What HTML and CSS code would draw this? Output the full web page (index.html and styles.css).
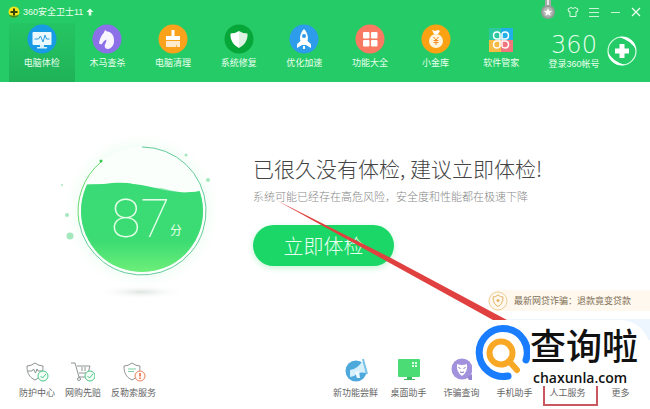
FILE: index.html
```html
<!DOCTYPE html>
<html lang="zh-CN">
<head>
    <meta charset="UTF-8">
    <meta name="viewport" content="width=device-width, initial-scale=1.0">
    <title>360安全卫士11</title>
    <link rel="stylesheet" href="styles.css">
</head>
<body>
    <header class="header">
        <div class="titlebar">
            <svg class="brand-icon" viewBox="0 0 12 12" width="12" height="12">
                <circle cx="6" cy="6" r="5.5" fill="#f5e51b"/>
                <path d="M1 8.500A5.500 5.500 0 0 0 11 8.500Q6 11 1 8.500Z" fill="#3a8d22"/>
                <path d="M6 2.500v7M2.500 6h7" stroke="#33420c" stroke-width="2"/>
            </svg>
            <h1 class="brand">360安全卫士11</h1>
            <svg viewBox="0 0 8 8" width="8" height="8"><path d="M4 0.500L7.500 4H5.300v3.500H2.700V4H.5z" fill="#e4ffe9"/></svg>
            <div class="window-buttons">
                <button class="win-btn medal" aria-label="勋章">
                    <svg viewBox="0 0 16 20" width="16" height="20">
                        <path d="M5 0h6v7H5z" fill="#a6aaa8"/><path d="M7 0h2v6H7z" fill="#e5e8e6"/>
                        <circle cx="8" cy="12" r="7" fill="#969c99"/><circle cx="8" cy="12" r="5" fill="#b3b8b5"/>
                        <path d="M8 8l1.200 2.700 2.900.3-2.200 1.900.7 2.900L8 14.300l-2.600 1.500.7-2.900L3.900 11l2.900-.3z" fill="#fff"/>
                    </svg>
                </button>
                <button class="win-btn" aria-label="换肤">
                    <svg viewBox="0 0 12 12" width="12" height="12"><path d="M4 1.500L1 3l.7 2.800L3 5.500v5h6v-5l1.300.3L11 3 8 1.500Q6 3.500 4 1.500z" fill="none" stroke="#dcfbe5"/></svg>
                </button>
                <button class="win-btn" aria-label="菜单">
                    <svg viewBox="0 0 12 12" width="12" height="12"><path d="M1 2.500h10M1 6.500h10M1 10.500h10" stroke="#c8f6d6"/></svg>
                </button>
                <button class="win-btn" aria-label="最小化">
                    <svg viewBox="0 0 12 12" width="12" height="12"><path d="M2 6.500h9" stroke="#c8f6d6"/></svg>
                </button>
                <button class="win-btn" aria-label="关闭">
                    <svg viewBox="0 0 12 12" width="12" height="12"><path d="M2 2l8 8M10 2l-8 8" stroke="#effff3" stroke-width="1.200"/></svg>
                </button>
            </div>
        </div>

        <div class="toolbar">
            <nav class="nav">
                <a class="tab active" href="#">
                    <svg viewBox="0 0 30 30" width="30" height="30">
                        <circle cx="15" cy="15" r="14.500" fill="#169be4"/>
                        <rect x="5.500" y="8" width="19" height="13" rx="1" fill="#eaf8ff"/>
                        <path d="M13 21h4v2h3v1.500H10V23h3z" fill="#d8f0fc"/>
                        <path d="M7.500 15h4l2-3 2.500 6 2-7 1.500 4h3" fill="none" stroke="#2a9ddb"/>
                    </svg>
                    <span>电脑体检</span>
                </a>
                <a class="tab" href="#">
                    <svg viewBox="0 0 30 30" width="30" height="30">
                        <circle cx="15" cy="15" r="14.500" fill="#8b70e8"/>
                        <path d="M13 6l2 1.500c5 .5 7.500 5 7 10 0 4-3 7-6 7.500-4-.5-4-3.500-2-6.500l.5-3-2.500 1.500-2.500 3.500-2.500-1c.5-4 2-8 5-11z" fill="#f8f5ff"/>
                    </svg>
                    <span>木马查杀</span>
                </a>
                <a class="tab" href="#">
                    <svg viewBox="0 0 30 30" width="30" height="30">
                        <circle cx="15" cy="15" r="14.500" fill="#fba21d"/>
                        <path d="M13.500 6h3v6H22v4H8v-4h5.500z" fill="#fff"/>
                        <path d="M8 17h14v6h-3v-3l-1 3H8z" fill="#ffeacc"/>
                    </svg>
                    <span>电脑清理</span>
                </a>
                <a class="tab" href="#">
                    <svg viewBox="0 0 30 30" width="30" height="30">
                        <circle cx="15" cy="15" r="14.500" fill="#07a638"/>
                        <path d="M15 7q4 2.500 8.500 2.500c.5 7-3 11.500-8.500 14.500z" fill="#dcf3e2"/>
                        <path d="M15 7q-4 2.500-8.500 2.500C6 16.500 9.500 21 15 24z" fill="#fff"/>
                    </svg>
                    <span>系统修复</span>
                </a>
                <a class="tab" href="#">
                    <svg viewBox="0 0 30 30" width="30" height="30">
                        <circle cx="15" cy="15" r="14.500" fill="#2c9ceb"/>
                        <path d="M15 5c4 4 4.500 9 3.500 12l3.500 3v4l-5-3h-4l-5 3v-4l3.500-3C10.500 14 11 9 15 5zM14 22h2v3h-2z" fill="#fff"/>
                        <circle cx="15" cy="12" r="2" fill="#2c9ceb"/>
                    </svg>
                    <span>优化加速</span>
                </a>
                <a class="tab" href="#">
                    <svg viewBox="0 0 30 30" width="30" height="30">
                        <circle cx="15" cy="15" r="14.500" fill="#fa7963"/>
                        <g fill="#fff"><rect x="8" y="8" width="6.500" height="6.500" rx="1"/><rect x="16" y="8" width="6.500" height="6.500" rx="1"/><rect x="8" y="16" width="6.500" height="6.500" rx="1"/><rect x="16" y="16" width="6.500" height="6.500" rx="1"/></g>
                    </svg>
                    <span>功能大全</span>
                </a>
                <a class="tab" href="#">
                    <svg viewBox="0 0 30 30" width="30" height="30">
                        <circle cx="15" cy="15" r="14.500" fill="#fba214"/>
                        <path d="M11 6l3 1 3-1 2 1-2 3h-4z" fill="#fff"/><circle cx="15" cy="17" r="7" fill="#fff5dc"/>
                        <path d="M12.500 13l2.500 3 2.500-3M12.500 16.500h5M12.500 18.500h5M15 16v5" stroke="#f58d22" fill="none"/>
                    </svg>
                    <span>小金库</span>
                </a>
                <a class="tab" href="#">
                    <svg viewBox="0 0 30 30" width="30" height="30">
                        <path d="M3 4h12v12H3z" fill="#2cc9a0"/><path d="M15 4h12v12H15z" fill="#20b0e8"/>
                        <path d="M3 16h12v12H3z" fill="#f6bb45"/><path d="M15 16h12v12H15z" fill="#f2747c"/>
                        <g fill="none" stroke="#fff" stroke-width="1.500"><path d="M14 15H11q-3.500 0-3.500-3.500T11 8t3 3.500zM16 15h3q3.500 0 3.500-3.500T19 8t-3 3.500zM14 17h-3q-3.500 0-3.500 3.500T11 24t3-3.500zM16 17h3q3.500 0 3.500 3.500T19 24t-3-3.500z"/></g>
                    </svg>
                    <span>软件管家</span>
                </a>
            </nav>
            <a class="account" href="#">
                <span class="account-text">
                    <span class="logo-text">360</span>
                    <span>登录360帐号</span>
                </span>
                <svg viewBox="0 0 32 32" width="32" height="32">
                    <circle cx="16" cy="16" r="14" fill="none" stroke="#dcfce6" stroke-width="1.200"/>
                    <path d="M13 2C22 0 30 7 30 15Q26 6 13 2zM2 17Q6 26 19 30C10 32 2 25 2 17z" fill="#fff"/>
                    <path d="M16 9v14M9 16h14" stroke="#fff" stroke-width="5"/>
                </svg>
            </a>
        </div>
    </header>

    <main class="main">
        <section class="hero">
            <svg class="gauge" viewBox="0 0 180 160" width="180" height="160" role="img" aria-label="87分">
                <defs>
                    <linearGradient id="liquid" x1="0" y1="0" x2="0" y2="1">
                        <stop offset="0" stop-color="#3adb77"/><stop offset="0.600" stop-color="#3cdc73"/><stop offset="1" stop-color="#7af37a"/>
                    </linearGradient>
                    <radialGradient id="glow">
                        <stop offset="0.700" stop-color="#d5fbe0"/><stop offset="1" stop-color="#fff" stop-opacity="0"/>
                    </radialGradient>
                    <radialGradient id="shadow">
                        <stop offset="0" stop-color="#dfe5e1"/><stop offset="1" stop-color="#fff" stop-opacity="0"/>
                    </radialGradient>
                    <clipPath id="bowl"><circle cx="92" cy="81" r="61"/></clipPath>
                </defs>
                <circle cx="92" cy="81" r="82" fill="url(#glow)" opacity="0.500"/>
                <circle cx="92" cy="81" r="64" fill="#fbfffc"/>
                <ellipse cx="91" cy="162" rx="46" ry="7" fill="url(#shadow)"/>
                <g clip-path="url(#bowl)">
                    <path d="M30 53q20 4 45 4t78 3v90H30z" fill="#a3eebf"/>
                    <path d="M30 55q10-1 24-1c30-5 50 6 76 8q12 1 24-2v90H30z" fill="url(#liquid)"/>
                </g>
                <path d="M82 54c20 0 34 6 48 8q12 1 24-2V46H82z" fill="#fbfffc" clip-path="url(#bowl)"/>
                <path d="M92 17a64 64 0 1 1-63 75" fill="none" stroke="#64cb9b"/>
                <path d="M29 92A64 64 0 0 1 51 32" fill="none" stroke="#65d86c"/>
                <circle cx="51" cy="31" r="1.500" fill="#37c94b"/>
                <g fill="#a4e9bd"><circle cx="20" cy="106" r="3.500"/><circle cx="17" cy="85" r="2"/><circle cx="12" cy="55" r="1"/><circle cx="136" cy="25" r="1.500"/><circle cx="158" cy="50" r="2"/></g>
                <text class="score" x="61" y="107">87</text>
                <text class="score-unit" x="120" y="105">分</text>
            </svg>
            <div class="hero-text">
                <h2 class="hero-title">已很久没有体检, 建议立即体检!</h2>
                <p class="hero-note">系统可能已经存在高危风险，安全度和性能都在极速下降</p>
                <button class="check-btn">立即体检</button>
            </div>
        </section>

        <aside class="tips">
            <a class="tip" href="#">
                <svg viewBox="0 0 20 20" width="20" height="20">
                    <circle cx="10" cy="10" r="9" fill="none" stroke="#edcf98"/>
                    <path d="M10 4q2.500 2 5 2c0 5-1.500 7.500-5 9.500C6.500 13.500 5 11 5 6q2.500 0 5-2z" fill="none" stroke="#e3b563"/>
                    <circle cx="10" cy="9.500" r="1.500" fill="#e3b563"/>
                </svg>
                <span>最新网贷诈骗：退款竟变贷款</span>
            </a>
            <div class="tip tip-blue"></div>
        </aside>
    </main>

    <footer class="footer">
        <div class="services">
            <a class="tool" href="#">
                <svg viewBox="0 0 24 22" width="24" height="22">
                    <path d="M10 1q4 3 8 3c0 7-2 11-8 14C4 15 2 11 2 4q4 0 8-3z" fill="none" stroke="#8d9490"/>
                    <path d="M3 9h4l1.500-2 2 4 1.500-4 1 2h4" fill="none" stroke="#8d9490"/>
                    <circle cx="18" cy="14" r="5" fill="#f4fff7" stroke="#4bc785"/><path d="M15.500 14l2 2 3.500-4" fill="none" stroke="#4bc785"/>
                </svg>
                <span>防护中心</span>
            </a>
            <a class="tool" href="#">
                <svg viewBox="0 0 24 22" width="24" height="22">
                    <path d="M0 1h4l4 14h8M6 4h13l-2 7H8M11 5v4M14 5v4" fill="none" stroke="#8d9490"/>
                    <circle cx="8" cy="17" r="1.500" fill="none" stroke="#8d9490"/>
                    <circle cx="19" cy="14" r="5" fill="#f4fff7" stroke="#4bc785"/><path d="M16.500 14l2 2 3.500-4" fill="none" stroke="#4bc785"/>
                </svg>
                <span>网购先赔</span>
            </a>
            <a class="tool" href="#">
                <svg viewBox="0 0 24 22" width="24" height="22">
                    <path d="M10 1q4 3 8 3c0 7-2 11-8 14C4 15 2 11 2 4q4 0 8-3z" fill="none" stroke="#8d9490"/>
                    <path d="M6 7h8M6 9.500h6" stroke="#7dcfa2"/>
                    <circle cx="18" cy="14" r="5" fill="#fff8f4" stroke="#e5835f"/><path d="M18 11v3.500M18 15.500v1.500" stroke="#e5633b" stroke-width="1.500"/>
                </svg>
                <span>反勒索服务</span>
            </a>
        </div>
        <div class="shortcuts">
            <a class="tool" href="#">
                <svg viewBox="0 0 26 26" width="26" height="26">
                    <circle cx="13" cy="13" r="10.500" fill="#4da8dc"/>
                    <path d="M7 12q8-1 13-10l3 13q-7-2-12 3l-4 1z" fill="#d5effc"/><path d="M20 1l4 15" stroke="#7cc1e6" stroke-width="2"/><path d="M12 14l4-1 1 7h-3z" fill="#eef9ff"/>
                </svg>
                <span>新功能尝鲜</span>
            </a>
            <a class="tool" href="#">
                <svg viewBox="0 0 26 26" width="26" height="26">
                    <rect x="2" y="1" width="22" height="18" rx="1" fill="#4bdc75"/><path d="M11 19h5v2h3v1H8v-1h3z" fill="#35bd60"/>
                    <path d="M16 4h2v2h-2zM19 4h2v2h-2zM16 7h2v2h-2zM19 7h2v2h-2z" fill="#e2ffe8"/>
                </svg>
                <span>桌面助手</span>
            </a>
            <a class="tool" href="#">
                <svg viewBox="0 0 26 26" width="26" height="26">
                    <circle cx="13" cy="11" r="10.500" fill="#a291dd"/><path d="M18 19l5-3 1 6h-4z" fill="#9685d1"/>
                    <path d="M8 6q5 2 10 0 1 8-5 12Q7 14 8 6z" fill="#fff"/><path d="M9.500 9.500l2 1M16.500 9.500l-2 1M11 14q2 1 4 0" stroke="#8370c5" fill="none"/>
                </svg>
                <span>诈骗查询</span>
            </a>
            <a class="tool" href="#"><span>手机助手</span></a>
            <a class="tool" href="#"><span>人工服务</span></a>
            <a class="tool" href="#"><span>更多</span></a>
        </div>
    </footer>

    <!-- Red arrow and frame pointing at the service link -->
    <svg class="arrow" viewBox="0 0 232 120" width="232" height="120">
        <path d="M0 0L115 58 231 120H217L112 62Z" fill="#e0403f"/>
    </svg>
    <div class="frame"></div>

    <div class="watermark">
        <svg viewBox="0 0 58 58" width="58" height="58">
            <path d="M54 36A24 24 0 1 0 36 52" fill="none" stroke="#1a7dff" stroke-width="7" class="ring"/>
            <circle cx="29" cy="29" r="11.500" fill="none" stroke="#f9a825" stroke-width="6"/>
            <path d="M37 37l8 9" stroke="#f9a825" stroke-width="6" stroke-linecap="round"/>
        </svg>
        <div class="watermark-text">
            <span class="watermark-name">查询啦</span>
            <span class="watermark-url">chaxunla.com</span>
        </div>
    </div>
</body>
</html>
```

FILE: styles.css
```css
* {
    box-sizing: border-box;
}

body {
    margin: 0;
    min-height: 100vh;
    display: flex;
    flex-direction: column;
    position: relative;
    overflow: hidden;
    font-family: "Liberation Sans", "Noto Sans CJK SC", sans-serif;
    font-size: 9px;
    line-height: 12px;
    color: #666;
    background-color: #fff;
}

a {
    color: inherit;
    text-decoration: none;
}

button {
    border: 0;
    padding: 0;
    font-family: inherit;
    cursor: pointer;
}

svg {
    display: block;
    flex-shrink: 0;
}

/* Header */
.header {
    background-color: #25cb66;
    color: #eafff0;
}

.titlebar {
    display: flex;
    align-items: center;
    height: 23px;
    padding: 0 4px 0 8px;
    gap: 3px;
}

.brand {
    margin: 0;
    font-size: 9px;
    font-weight: normal;
}

.window-buttons {
    display: flex;
    align-items: center;
    margin-left: auto;
}

.win-btn {
    display: flex;
    justify-content: center;
    width: 21px;
    background: none;
}

.medal {
    width: 28px;
    height: 23px;
}

.toolbar {
    display: flex;
    padding-left: 9px;
}

.nav {
    flex: 1;
    display: flex;
}

.tab {
    flex: 1;
    display: flex;
    flex-direction: column;
    align-items: center;
    gap: 3px;
    height: 59px;
    padding-top: 1px;
}

.active {
    background: linear-gradient(#25c563, #20b258);
}

.account {
    display: flex;
    align-items: center;
    gap: 2px;
    width: 116px;
    height: 56px;
    padding-left: 10px;
}

.account-text {
    display: flex;
    flex-direction: column;
    align-items: center;
    width: 60px;
}

.logo-text {
    font-family: "DejaVu Sans", sans-serif;
    font-size: 24px;
    font-weight: 200;
    line-height: 26px;
}

/* Main */
.main {
    display: flex;
    flex-direction: column;
}

.hero {
    display: flex;
    gap: 23px;
    padding: 48px 0 0 50px;
}

.gauge {
    overflow: visible;
}

.score {
    font-family: Roboto, sans-serif;
    font-size: 54px;
    font-weight: 100;
    fill: #e5ffe9;
}

.score-unit {
    font-size: 12px;
    fill: #e5ffe9;
}

.hero-text {
    padding-top: 24px;
}

.hero-title {
    margin: 0;
    font-family: "Noto Sans CJK SC", sans-serif;
    font-size: 21px;
    font-weight: 300;
    line-height: 28px;
    color: #444;
}

.hero-note {
    margin: 6px 0 21px;
    font-family: "Noto Sans CJK SC", sans-serif;
    font-size: 11px;
    font-weight: 300;
    line-height: 16px;
    color: #888;
}

.check-btn {
    width: 141px;
    height: 41px;
    border-radius: 21px;
    font-family: "Noto Sans CJK SC", sans-serif;
    font-size: 20px;
    font-weight: 300;
    color: #e9fff0;
    background-color: #1bd768;
    box-shadow: 0 2px 6px #c5f3d5;
}

.tips {
    align-self: flex-end;
    width: 162px;
    display: flex;
    flex-direction: column;
    gap: 8px;
}

.tip {
    display: flex;
    align-items: center;
    gap: 6px;
    height: 21px;
    border-radius: 11px 0 0 11px;
    color: #806f56;
    background-color: #fff8ee;
}

.tip-blue {
    background-color: #edf6ff;
}

/* Footer */
.footer {
    display: flex;
    justify-content: space-between;
    align-items: flex-end;
    margin-top: auto;
    padding: 0 3px 10px 19px;
}

.services {
    display: flex;
    gap: 10px;
}

.shortcuts {
    display: flex;
    align-items: flex-end;
}

.shortcuts .tool {
    width: 53px;
}

.tool {
    display: flex;
    flex-direction: column;
    align-items: center;
    gap: 3px;
}

/* Overlays */
.arrow {
    position: absolute;
    left: 276px;
    top: 200px;
}

.frame {
    position: absolute;
    right: 52px;
    bottom: 3px;
    width: 55px;
    height: 30px;
    border: 2px solid #cc5660;
}

.watermark {
    position: absolute;
    right: 0;
    bottom: 23px;
    display: flex;
    align-items: center;
    width: 178px;
    height: 66px;
    padding-right: 4px;
    border-radius: 0 30px 12px 0;
    background-color: #fff;
}

.ring {
    stroke-linecap: round;
}

.watermark-text {
    display: flex;
    flex-direction: column;
    padding-top: 6px;
    color: #111;
}

.watermark-name {
    font-size: 36px;
    font-weight: 500;
    line-height: 44px;
}

.watermark-url {
    padding-left: 3px;
    font-family: "Open Sans", sans-serif;
    font-size: 14px;
    font-weight: 600;
    line-height: 16px;
}
```
